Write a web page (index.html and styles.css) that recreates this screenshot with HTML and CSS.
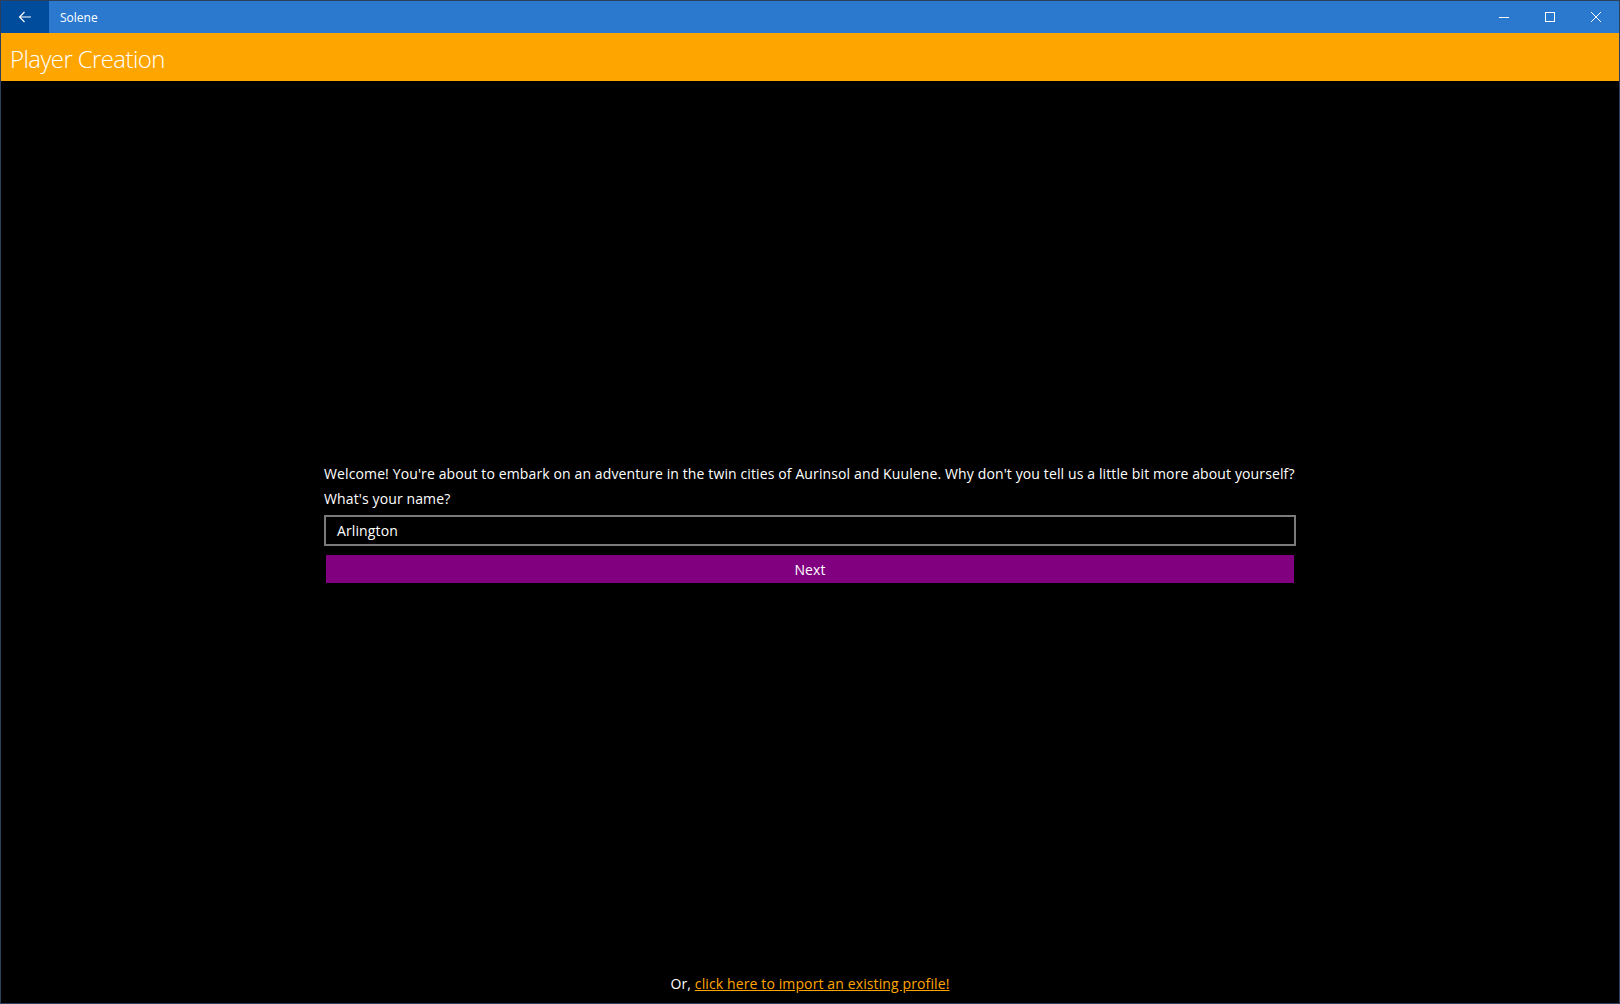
FILE: index.html
```html
<!DOCTYPE html>
<html>
<head>
<meta charset="utf-8">
<link rel="stylesheet" href="styles.css">
</head>
<body>
<div class="window">
  <div class="titlebar">
    <div class="back">
      <svg width="14" height="12" viewBox="0 0 14 12"><path d="M13 6H1.5M6.5 1L1.5 6l5 5" fill="none" stroke="#fff" stroke-width="1.1"/></svg>
    </div>
    <div class="apptitle">Solene</div>
    <div class="controls">
      <div class="ctl"><svg width="10" height="10" viewBox="0 0 10 10"><path d="M0 5.5H10" stroke="#fff" stroke-width="1"/></svg></div>
      <div class="ctl"><svg width="10" height="10" viewBox="0 0 10 10"><rect x="0.5" y="0.5" width="9" height="9" fill="none" stroke="#fff" stroke-width="1"/></svg></div>
      <div class="ctl"><svg width="10" height="10" viewBox="0 0 10 10"><path d="M0 0L10 10M10 0L0 10" stroke="#fff" stroke-width="1"/></svg></div>
    </div>
  </div>
  <div class="header">Player Creation</div>
  <div class="main">
    <div class="form">
      <p class="line">Welcome! You're about to embark on an adventure in the twin cities of Aurinsol and Kuulene. Why don't you tell us a little bit more about yourself?</p>
      <p class="line second">What's your name?</p>
      <div class="input">Arlington</div>
      <div class="button">Next</div>
    </div>
  </div>
  <div class="footer">Or, <span class="link">click here to import an existing profile!</span></div>
</div>
</body>
</html>
```
FILE: styles.css
```css
html, body {
  margin: 0;
  padding: 0;
  background: #000;
}
.window {
  width: 1620px;
  height: 1004px;
  box-sizing: border-box;
  border: 1px solid #2b3f5a;
  display: flex;
  flex-direction: column;
  font-family: "Open Sans", "Noto Sans", sans-serif;
  color: #fff;
  background: #000;
}
.titlebar {
  height: 32px;
  background: #2b79cf;
  display: flex;
  align-items: stretch;
  flex-shrink: 0;
}
.back {
  width: 48px;
  background: #004c9c;
  display: flex;
  align-items: center;
  justify-content: center;
}
.apptitle {
  font-size: 12px;
  display: flex;
  align-items: center;
  padding-left: 11px;
  flex: 1;
}
.controls {
  display: flex;
}
.ctl {
  width: 46px;
  display: flex;
  align-items: center;
  justify-content: center;
}
.header {
  height: 48px;
  box-sizing: border-box;
  background: #ffa500;
  font-size: 24px;
  font-weight: 300;
  letter-spacing: -0.6px;
  line-height: 44px;
  padding-top: 4px;
  padding-left: 9px;
  flex-shrink: 0;
}
.main {
  flex: 1;
  display: flex;
  align-items: center;
  justify-content: center;
}
.form {
  width: 972px;
  display: flex;
  flex-direction: column;
  font-size: 14px;
  letter-spacing: 0.12px;
}
.line {
  margin: 0;
  line-height: 20px;
  white-space: nowrap;
}
.second {
  margin-top: 5px;
}
.input {
  margin-top: 6px;
  height: 31px;
  box-sizing: border-box;
  border: 2px solid #7a7a7a;
  padding-left: 11px;
  line-height: 27px;
}
.button {
  margin: 9px 2px 0;
  height: 28px;
  background: #800080;
  text-align: center;
  line-height: 29px;
}
.footer {
  height: 38px;
  flex-shrink: 0;
  font-size: 14px;
  letter-spacing: 0.12px;
  text-align: center;
  line-height: 20px;
  padding-top: 9px;
  box-sizing: border-box;
}
.link {
  color: #ffa500;
  text-decoration: underline;
}
```
